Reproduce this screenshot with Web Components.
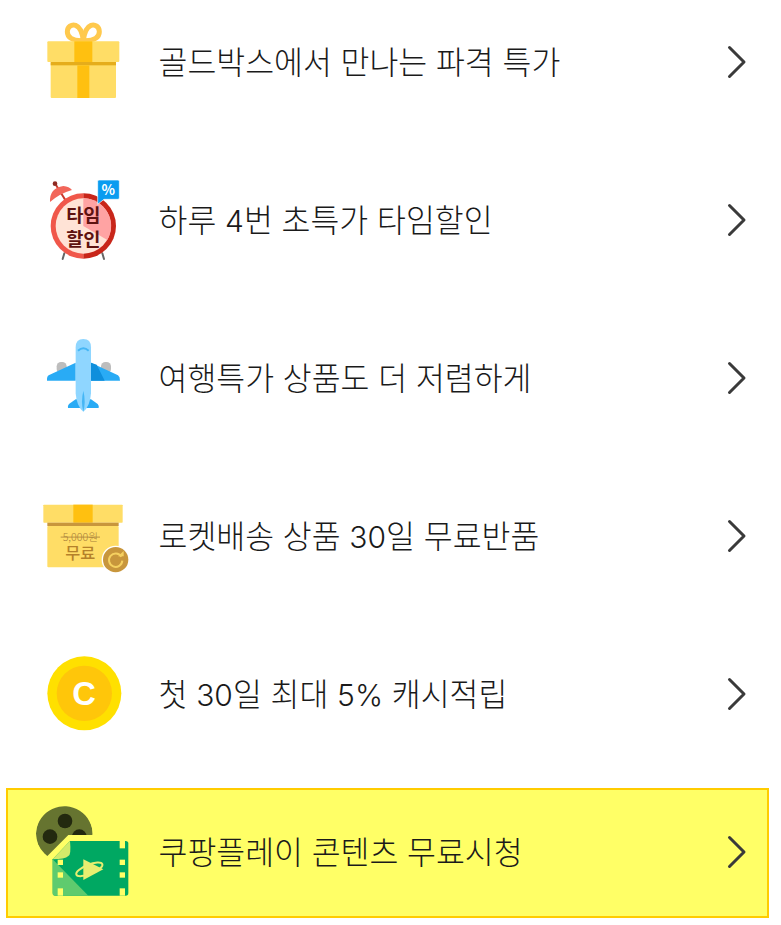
<!DOCTYPE html>
<html lang="ko">
<head>
<meta charset="utf-8">
<title>혜택</title>
<style>
  html, body { margin: 0; padding: 0; background: #fff; }
  body { font-family: "Noto Sans CJK KR", "Noto Sans", sans-serif; height: 925px; overflow: hidden; }
  .n { font-family: "Inter", sans-serif; font-size: 30px; font-weight: 300; }
</style>
</head>
<body>

<template id="benefit-list">
  <style>
    :host { display: flex; flex-direction: column; gap: 28px; margin: -2px 12px 0 6px; }
  </style>
  <slot></slot>
</template>

<template id="benefit-row">
  <style>
    :host {
      display: flex;
      align-items: center;
      box-sizing: border-box;
      height: 130px;
      padding: 0 17px 0 22px;
      border: 2px solid transparent;
      color: #1a1a1a;
      font-size: 31.4px;
      font-weight: 300;
    }
    :host([highlight]) {
      background: #ffff66;
      border-color: #ffcc00;
    }
    .label { flex: 1; margin: -4px 0 0 18.5px; white-space: nowrap; line-height: 1; }
    svg { display: block; flex: none; margin-top: -2px; }
  </style>
  <slot name="icon"></slot>
  <span class="label"><slot></slot></span>
  <svg width="24" height="36" viewBox="0 0 24 36">
    <path d="M3.5 3.5L18 18L3.5 32.5" fill="none" stroke="#3a3a3a" stroke-width="3" stroke-linecap="round" stroke-linejoin="round"/>
  </svg>
</template>

<script>
  const ICONS = {
    gift: `<svg viewBox="0 -36 330 390" width="110" height="130">
      <path d="M160 92C125 94 112 80 112 65C112 50 125 42 137 46C152 52 158 74 160 92Z" fill="none" stroke="#ffc94d" stroke-width="15" stroke-linejoin="round"/>
      <path d="M160 92C195 94 208 80 208 65C208 50 195 42 183 46C168 52 162 74 160 92Z" fill="none" stroke="#ffc94d" stroke-width="15" stroke-linejoin="round"/>
      <rect x="52" y="94" width="216" height="62" rx="3" fill="#ffdd66"/>
      <rect x="62" y="156" width="196" height="108" rx="3" fill="#ffdd66"/>
      <rect x="62" y="156" width="196" height="10" fill="#e5ad1b"/>
      <rect x="133" y="94" width="54" height="62" fill="#ffc010"/>
      <rect x="142" y="166" width="36" height="98" fill="#ffc010"/>
    </svg>`,
    clock: `<svg viewBox="0 -42 330 390" width="110" height="130">
      <path d="M103 250L98 267M217 250L222 267" stroke="#666" stroke-width="6" stroke-linecap="round"/>
      <path d="M78 45L112 100" stroke="#c9382c" stroke-width="6"/>
      <path d="M60 96Q58 54 100 48Q118 50 126 60Q90 70 60 96Z" fill="#f2665a"/>
      <circle cx="75" cy="41" r="7" fill="#8e2a22"/>
      <path d="M160 70A98 98 0 0 0 160 266Z" fill="#f0574a"/>
      <path d="M160 70A98 98 0 0 1 160 266Z" fill="#c8261a"/>
      <circle cx="160" cy="168" r="83" fill="#ffe3d6"/>
      <path d="M160 168V85A83 83 0 0 1 232 210Z" fill="#ffa3a3"/>
      <text x="160" y="157" text-anchor="middle" font-size="56" font-weight="700" fill="#5e1210">타임</text>
      <text x="160" y="227" text-anchor="middle" font-size="56" font-weight="700" fill="#5e1210">할인</text>
      <path d="M207 30H264a4 4 0 0 1 4 4V84a4 4 0 0 1 -4 4H222L203 103V34a4 4 0 0 1 4 -4Z" fill="#0a9cf0" stroke="#fff" stroke-width="2"/>
      <text x="235" y="74" text-anchor="middle" font-size="42" font-weight="700" fill="#fff">%</text>
    </svg>`,
    plane: `<svg viewBox="0 -48 330 390" width="110" height="130">
      <rect x="80" y="96" width="30" height="34" rx="13" fill="#bdbdbd"/>
      <rect x="213" y="96" width="30" height="34" rx="13" fill="#bdbdbd"/>
      <path d="M137 98L56 136Q50 140 51 152H137Z" fill="#29abf5"/>
      <path d="M183 98L264 136Q270 140 270 152H183Z" fill="#29abf5"/>
      <path d="M183 98L200 104L224 152H183Z" fill="#0f8fdc"/>
      <path d="M137 208L117 222Q112 228 114 234H206Q208 228 203 222L183 208Z" fill="#29abf5"/>
      <path d="M137 52Q137 27 160 27Q183 27 183 52V190Q180 230 160 245Q140 230 137 190Z" fill="#8fd6ff"/>
      <path d="M160 182Q168 215 160 245Q152 215 160 182Z" fill="#45b6f5"/>
      <path d="M144 62Q160 48 176 62" fill="none" stroke="#45b6f5" stroke-width="6"/>
    </svg>`,
    box: `<svg viewBox="0 -54 330 390" width="110" height="130">
      <rect x="40" y="44" width="238" height="54" rx="2" fill="#ffdd66"/>
      <rect x="130" y="44" width="58" height="54" fill="#ffc010"/>
      <rect x="52" y="108" width="214" height="124" rx="3" fill="#ffdd66"/>
      <rect x="52" y="98" width="214" height="10" fill="#c8963c"/>
      <text x="151" y="152" text-anchor="middle" font-size="32" fill="#a9803a">5,000원</text>
      <rect x="92" y="140" width="118" height="2.5" fill="#a9803a"/>
      <text x="151" y="206" text-anchor="middle" font-size="49" font-weight="500" fill="#b5812a">무료</text>
      <circle cx="257" cy="209" r="42" fill="#fff"/>
      <circle cx="257" cy="209" r="38" fill="#c8963c"/>
      <path d="M274 200A20 20 0 1 0 277 212" fill="none" stroke="#f5d060" stroke-width="6"/>
      <path d="M264 199H281V183Z" fill="#f5d060"/>
    </svg>`,
    coin: `<svg viewBox="0 -60 330 390" width="110" height="130">
      <circle cx="163" cy="130" r="111" fill="#ffe000"/>
      <circle cx="163" cy="130" r="83" fill="#ffc60a"/>
      <text x="162" y="165" text-anchor="middle" style="font-family:'Liberation Sans',sans-serif" font-size="98" font-weight="700" fill="#fff">C</text>
    </svg>`,
    film: `<svg viewBox="90 24 330 390" width="110" height="130">
      <clipPath id="reel"><path d="M278 165L205 165L140 230A85 85 0 1 1 278 165Z"/></clipPath>
      <g clip-path="url(#reel)">
        <circle cx="193" cy="160" r="85" fill="#667430"/>
        <circle cx="195" cy="123" r="22" fill="#23290f"/>
        <circle cx="150" cy="170" r="22" fill="#23290f"/>
        <circle cx="238" cy="170" r="22" fill="#23290f"/>
      </g>
      <path d="M210 183H377a8 8 0 0 1 8 8V339a8 8 0 0 1 -8 8H166a8 8 0 0 1 -8 -8V238Z" fill="#00a862"/>
      <path d="M158 238V339a8 8 0 0 0 8 8H265Z" fill="#5fcb6e"/>
      <path d="M158 238L210 183Q214 225 205 228Q195 238 158 238Z" fill="#d2ea6a"/>
      <g fill="#ffff66">
        <rect x="359" y="183" width="16" height="22"/>
        <rect x="359" y="239" width="16" height="16"/>
        <rect x="359" y="277" width="16" height="16"/>
        <rect x="359" y="325" width="16" height="22"/>
        <rect x="173" y="239" width="16" height="16"/>
        <rect x="173" y="277" width="16" height="16"/>
        <rect x="173" y="325" width="16" height="22"/>
      </g>
      <ellipse cx="268" cy="268" rx="42" ry="14" transform="rotate(-22 268 268)" fill="none" stroke="#e8ee70" stroke-width="6"/>
      <path d="M250 238L310 268L250 300Z" fill="#e8ee70"/>
    </svg>`
  };

  class BenefitIcon extends HTMLElement {
    connectedCallback() {
      const shadow = this.attachShadow({ mode: 'open' });
      shadow.innerHTML = `<style>
        :host { display: block; flex: none; width: 110px; height: 130px; }
        svg { display: block; overflow: hidden; }
        text { font-family: "Noto Sans CJK KR", sans-serif; }
      </style>${ICONS[this.getAttribute('name')]}`;
    }
  }

  // list and row only take their markup from the templates above
  class FromTemplate extends HTMLElement {
    connectedCallback() {
      const tpl = document.getElementById(this.localName);
      this.attachShadow({ mode: 'open' }).appendChild(tpl.content.cloneNode(true));
    }
  }

  customElements.define('benefit-icon', BenefitIcon);
  customElements.define('benefit-list', class extends FromTemplate {});
  customElements.define('benefit-row', class extends FromTemplate {});
</script>

<benefit-list>
  <benefit-row><benefit-icon slot="icon" name="gift"></benefit-icon>골드박스에서 만나는 파격 특가</benefit-row>
  <benefit-row><benefit-icon slot="icon" name="clock"></benefit-icon>하루 <span class="n">4</span>번 초특가 타임할인</benefit-row>
  <benefit-row><benefit-icon slot="icon" name="plane"></benefit-icon>여행특가 상품도 더 저렴하게</benefit-row>
  <benefit-row><benefit-icon slot="icon" name="box"></benefit-icon>로켓배송 상품 <span class="n">30</span>일 무료반품</benefit-row>
  <benefit-row><benefit-icon slot="icon" name="coin"></benefit-icon>첫 <span class="n">30</span>일 최대 <span class="n">5%</span> 캐시적립</benefit-row>
  <benefit-row highlight><benefit-icon slot="icon" name="film"></benefit-icon>쿠팡플레이 콘텐츠 무료시청</benefit-row>
</benefit-list>

</body>
</html>
